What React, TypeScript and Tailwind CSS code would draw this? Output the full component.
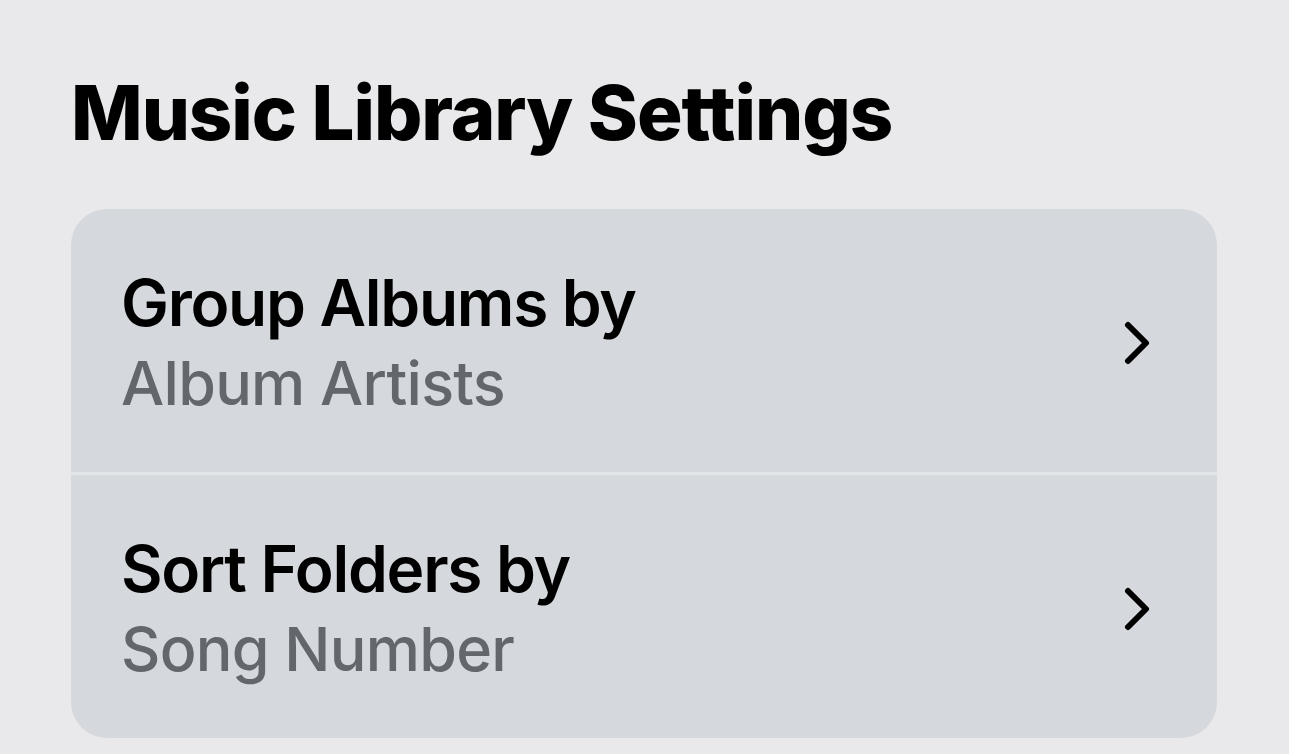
import React from 'react';

interface SettingRowProps {
  label: string;
  value: string;
}

const Chevron = () => (
  <svg width="26" height="44" viewBox="0 0 26 44" fill="none" className="shrink-0">
    <path d="M4 4L22 22L4 40" stroke="#000" strokeWidth="6" strokeLinecap="round" strokeLinejoin="round" />
  </svg>
);

const SettingRow: React.FC<SettingRowProps> = ({ label, value }) => (
  <div className="flex h-[263px] items-center justify-between pl-[50px] pr-[67px] pt-[5px]">
    <div className="flex flex-col">
      <span className="text-[64px] font-semibold leading-[80px] tracking-[-0.02em] text-black">{label}</span>
      <span className="text-[61px] font-medium leading-[80px] tracking-[-0.012em] text-[#63676c]">{value}</span>
    </div>
    <Chevron />
  </div>
);

export default function App() {
  return (
    <div className="min-h-screen w-full bg-[#e9e9eb] px-[71px] pt-[74px] font-['Inter','Noto_Sans',sans-serif]">
      <h1 className="text-[76px] font-extrabold leading-[76px] tracking-[-0.014em] text-black">Music Library Settings</h1>
      <div className="mt-[59px] w-[1146px] overflow-hidden rounded-[36px] bg-[#d5d9dd]">
        <SettingRow label="Group Albums by" value="Album Artists" />
        <div className="h-[3px] bg-[#e3e6e8]" />
        <SettingRow label="Sort Folders by" value="Song Number" />
      </div>
    </div>
  );
}
